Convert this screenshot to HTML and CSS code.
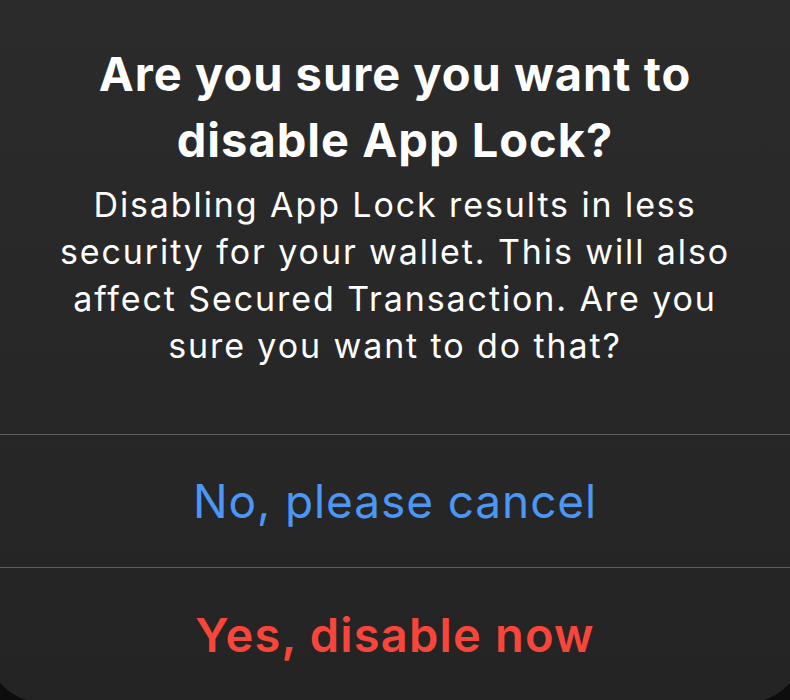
FILE: index.html
```html
<!DOCTYPE html>
<html lang="en">
<head>
    <meta charset="UTF-8">
    <meta name="viewport" content="width=device-width, initial-scale=1.0">
    <title>Disable App Lock</title>
    <link rel="stylesheet" href="styles.css">
</head>
<body>

<div class="alert">
    <div class="alert-content">
        <h2 class="alert-title">Are you sure you want to disable App Lock?</h2>
        <p class="alert-message">Disabling App Lock results in less security for your wallet. This will also affect Secured Transaction. Are you sure you want to do that?</p>
    </div>
    <button class="alert-action cancel">No, please cancel</button>
    <button class="alert-action destructive">Yes, disable now</button>
</div>

</body>
</html>
```

FILE: styles.css
```css
html, body {
    margin: 0;
    height: 100%;
    overflow: hidden;
}
body {
    background-color: #0d0d0d;
    font-family: Inter, "Noto Sans", sans-serif;
    -webkit-font-smoothing: antialiased;
}
.alert {
    display: flex;
    flex-direction: column;
    height: 703px;
    margin: 0 -15px;
    border-radius: 0 0 60px 60px;
    background: linear-gradient(#2b2b2b, #242424);
    color: #fff;
    text-align: center;
}
.alert-content {
    height: 434px;
    padding: 41px 55px 0;
    box-sizing: border-box;
}
.alert-title {
    margin: 0;
    font-size: 47px;
    font-weight: 650;
    line-height: 66px;
    letter-spacing: 1px;
    padding: 0 40px;
}
.alert-message {
    margin: 8px 0 0;
    font-size: 34px;
    font-weight: 400;
    line-height: 47px;
    letter-spacing: 1.9px;
}
.alert-action {
    height: 133px;
    border: none;
    border-top: 1px solid #5c5c5c;
    background: transparent;
    font-family: inherit;
    font-size: 46px;
    padding: 0;
    cursor: pointer;
}
.cancel {
    color: #4a97f6;
    font-weight: 400;
    letter-spacing: 0.9px;
}
.destructive {
    color: #fa453b;
    font-weight: 600;
    font-size: 47px;
    letter-spacing: 1.2px;
}
```
